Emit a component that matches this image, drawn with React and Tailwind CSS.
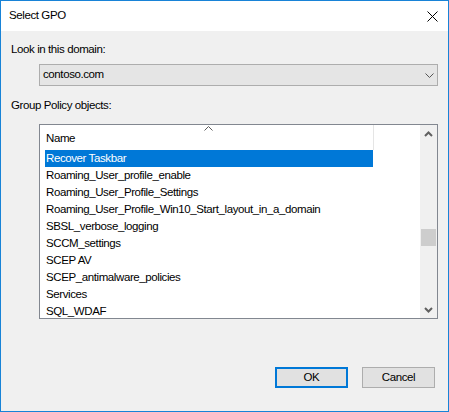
import React from "react";

const GPOS = [
  "Recover Taskbar",
  "Roaming_User_profile_enable",
  "Roaming_User_Profile_Settings",
  "Roaming_User_Profile_Win10_Start_layout_in_a_domain",
  "SBSL_verbose_logging",
  "SCCM_settings",
  "SCEP AV",
  "SCEP_antimalware_policies",
  "Services",
  "SQL_WDAF",
];

const Chevron = ({ className }) => (
  <svg width="9" height="5" viewBox="0 0 9 5" className={className}>
    <path d="M0.5 0.5 L4.5 4.5 L8.5 0.5" fill="none" stroke="currentColor" strokeWidth="1" />
  </svg>
);

const ScrollArrow = ({ up }) => (
  <svg width="9" height="6" viewBox="0 0 9 6">
    <path d={up ? "M1 5 L4.5 1.5 L8 5" : "M1 1 L4.5 4.5 L8 1"} fill="none" stroke="#606060" strokeWidth="2" />
  </svg>
);

export default function App() {
  return (
    <div className="w-[449px] h-[412px] border border-[#1883d7] flex flex-col bg-[#f0f0f0] text-[11.5px] tracking-[-0.4px] text-black font-['Segoe_UI','Liberation_Sans',sans-serif] overflow-hidden">
      {/* title bar */}
      <div className="h-[30px] bg-white flex items-center justify-between pl-[8px] pr-[10px]">
        <span>Select GPO</span>
        <svg width="11" height="11" viewBox="0 0 11 11">
          <path d="M0.5 0.5 L10.5 10.5 M10.5 0.5 L0.5 10.5" stroke="#000" strokeWidth="1" />
        </svg>
      </div>

      <div className="flex-1 flex flex-col pl-[10px] pr-[10px]">
        <div className="mt-[10px] h-[16px] leading-[16px]">Look in this domain:</div>

        <div className="mt-[7px] ml-[28px] w-[399px] h-[22px] border border-[#adadad] bg-[#e5e5e5] flex items-center justify-between pl-[3px] pr-[3px]">
          <span>contoso.com</span>
          <Chevron className="text-[#555]" />
        </div>

        <div className="mt-[11px] h-[16px] leading-[16px]">Group Policy objects:</div>

        <div className="mt-[11px] ml-[28px] w-[399px] h-[195px] border border-[#828790] bg-white flex">
          <div className="flex-1 pl-[5px] relative">
            <div className="h-[25px] w-[329px] border-r border-[#e5e5e5] flex items-end pb-[3px] pl-[1px] relative">
              <span>Name</span>
              <svg width="9" height="5" viewBox="0 0 9 5" className="absolute top-[1px] left-[159px]">
                <path d="M0.5 4.5 L4.5 0.5 L8.5 4.5" fill="none" stroke="#5a5a5a" strokeWidth="1" />
              </svg>
            </div>
            <div className="flex flex-col">
              {GPOS.map((g, i) => (
                <div
                  key={g}
                  className={
                    i === 0
                      ? "h-[17px] leading-[17px] w-[328px] pl-[1px] bg-[#0078d7] text-white whitespace-nowrap"
                      : "h-[17px] leading-[17px] pl-[1px] whitespace-nowrap"
                  }
                >
                  {g}
                </div>
              ))}
            </div>
          </div>
          <div className="w-[17px] bg-[#f0f0f0] flex flex-col items-center">
            <div className="h-[17px] flex items-center justify-center">
              <ScrollArrow up />
            </div>
            <div className="mt-[87px] w-[15px] h-[17px] bg-[#cdcdcd]" />
            <div className="flex-1" />
            <div className="h-[17px] flex items-center justify-center">
              <ScrollArrow />
            </div>
          </div>
        </div>

        <div className="mt-[48px] flex justify-end gap-[14px] pr-[3px]">
          <button className="w-[73px] h-[21px] border-2 border-[#0078d7] bg-[#e1e1e1] leading-none">OK</button>
          <button className="w-[73px] h-[21px] border border-[#adadad] bg-[#e1e1e1] leading-none">Cancel</button>
        </div>
      </div>
    </div>
  );
}
